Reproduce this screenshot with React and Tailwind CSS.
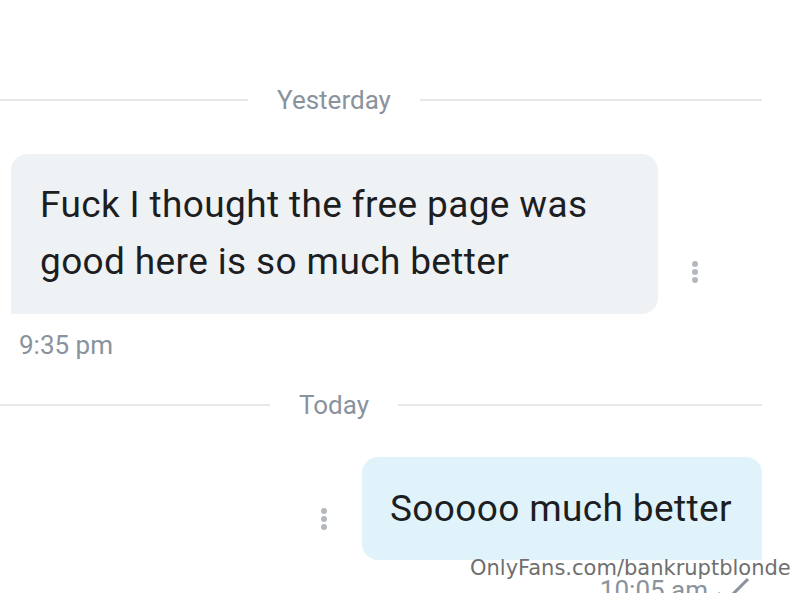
function DayDivider({ label }) {
  return (
    <div className="flex items-center pr-[38px]">
      <div className="h-[2px] flex-1 basis-0 bg-[#e6e8ea]" />
      <span className="px-[29px] text-[26px] leading-none text-[#8a939d]">{label}</span>
      <div className="h-[2px] flex-1 basis-[94px] bg-[#e6e8ea]" />
    </div>
  );
}

function Dots() {
  return (
    <div className="flex flex-col gap-[2px]">
      <span className="h-[6px] w-[6px] rounded-full bg-[#b3b8be]" />
      <span className="h-[6px] w-[6px] rounded-full bg-[#b3b8be]" />
      <span className="h-[6px] w-[6px] rounded-full bg-[#b3b8be]" />
    </div>
  );
}

export default function App() {
  return (
    <div className="relative h-[593px] w-[800px] overflow-hidden bg-white font-['Roboto',sans-serif]">
      <div className="pt-[87px]">
        <DayDivider label="Yesterday" />
      </div>

      {/* incoming */}
      <div className="mt-[41px] flex items-end pl-[11px]">
        <div className="w-[647px] rounded-[16px] rounded-bl-none bg-[#eff2f5] px-[29px] pb-[24px] pt-[22px] text-[37px] leading-[57px] tracking-[0.01em] text-[#1c1e21]">
          Fuck I thought the free page was good here is so much better
        </div>
        <div className="mb-[31px] ml-[34px]">
          <Dots />
        </div>
      </div>
      <div className="mt-[18px] pl-[19px] text-[26px] leading-none text-[#8a939d]">9:35 pm</div>

      <div className="mt-[34px]">
        <DayDivider label="Today" />
      </div>

      {/* outgoing */}
      <div className="mt-[39px] flex items-center justify-end pr-[38px]">
        <div className="mr-[35px] mt-[20px]">
          <Dots />
        </div>
        <div className="w-[400px] whitespace-nowrap rounded-[16px] rounded-br-none bg-[#e0f3fb] px-[28px] py-[23px] text-[37px] leading-[57px] tracking-[0.01em] text-[#1c1e21]">
          Sooooo much better
        </div>
      </div>
      <div className="flex items-center justify-end gap-[6px] pr-[48px] pt-[17px] text-[26px] leading-none text-[#8a939d]">
        10:05 am
        <svg width="38" height="26" viewBox="0 0 38 26" fill="none" stroke="#8a939d" strokeWidth="3">
          <path d="M4 16l8 8L34 2" />
        </svg>
      </div>

      <div className="absolute left-[470px] top-[558px] font-['DejaVu_Sans',sans-serif] text-[21px] leading-none text-[#6f6f6f]">
        OnlyFans.com/bankruptblonde
      </div>
    </div>
  );
}
